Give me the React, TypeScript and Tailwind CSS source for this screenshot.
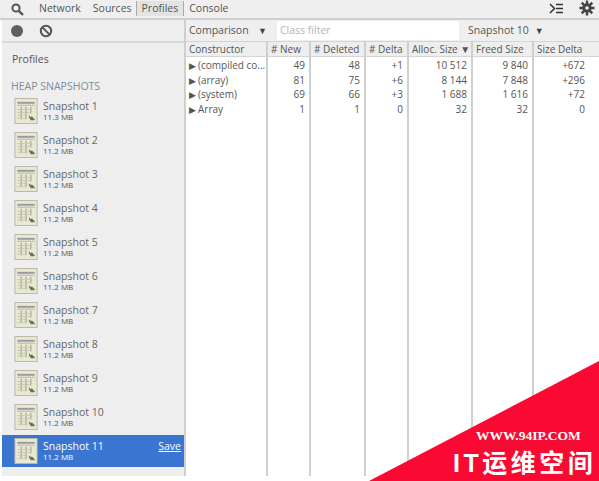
import React from 'react';

const SNAPSHOTS = [
  { name: 'Snapshot 1', size: '11.3 MB' },
  { name: 'Snapshot 2', size: '11.2 MB' },
  { name: 'Snapshot 3', size: '11.2 MB' },
  { name: 'Snapshot 4', size: '11.2 MB' },
  { name: 'Snapshot 5', size: '11.2 MB' },
  { name: 'Snapshot 6', size: '11.2 MB' },
  { name: 'Snapshot 7', size: '11.2 MB' },
  { name: 'Snapshot 8', size: '11.2 MB' },
  { name: 'Snapshot 9', size: '11.2 MB' },
  { name: 'Snapshot 10', size: '11.2 MB' },
];

const ROWS = [
  ['(compiled co...', '49', '48', '+1', '10 512', '9 840', '+672'],
  ['(array)', '81', '75', '+6', '8 144', '7 848', '+296'],
  ['(system)', '69', '66', '+3', '1 688', '1 616', '+72'],
  ['Array', '1', '1', '0', '32', '32', '0'],
];

const COLUMNS = [
  { label: 'Constructor', width: 'w-[82px] shrink-0 border-r-2' },
  { label: '# New', width: 'w-[43px] shrink-0 border-r-2' },
  { label: '# Deleted', width: 'w-[55px] shrink-0 border-r-2' },
  { label: '# Delta', width: 'w-[43px] shrink-0 border-r-2' },
  { label: 'Alloc. Size ▼', width: 'w-[64px] shrink-0 border-r-2' },
  { label: 'Freed Size', width: 'w-[61px] shrink-0 border-r-2' },
  { label: 'Size Delta', width: 'flex-1' },
];

function SnapshotIcon() {
  return (
    <svg width="24" height="26" viewBox="0 0 24 27" className="shrink-0 -mt-[3px]">
      <rect x="0.5" y="0.5" width="23" height="26" fill="#e9e8d2" stroke="#b9b8a4" />
      <rect x="3" y="4" width="18" height="2" fill="#9a9aa6" />
      <rect x="3" y="7" width="18" height="1" fill="#b4b4ba" />
      <path d="M7 9v13M12 9v13M17 9v7" stroke="#a9b096" strokeWidth="1.4" fill="none" />
      <path d="M3 12h14M3 15h14M3 18h9M3 21h9" stroke="#c8c9b4" strokeWidth="1" fill="none" />
      <path d="M15 18l2 2 1-1 3 3v1h-4l-2-3z" fill="#5b7a52" />
    </svg>
  );
}

function SnapshotRow({ name, size, selected }: { name: string; size: string; selected?: boolean }) {
  return (
    <div className={`flex items-center h-[34px] pl-[12px] pr-[3px] ${selected ? 'bg-[#3a75d2] text-white' : 'text-[#666]'}`}>
      <SnapshotIcon />
      <div className="ml-[5px] flex-1 -mt-[3px]">
        <div className="text-[10.5px] leading-[12px]">{name}</div>
        <div className={`text-[8px] leading-[10px] ${selected ? 'text-white' : 'text-[#555]'}`}>{size}</div>
      </div>
      {selected && <span className="text-[10.5px] underline self-start mt-[4px]">Save</span>}
    </div>
  );
}

export default function App() {
  return (
    <div className="relative w-[599px] h-[481px] overflow-hidden bg-white text-[10.5px] text-[#555] font-['Open_Sans','Noto_Sans',sans-serif]">
      <div className="flex items-center h-[18px] bg-[#efefef] border-b-2 border-[#cfcfcf] box-content">
        <svg width="13" height="13" viewBox="0 0 13 13" className="ml-[11px]">
          <circle cx="5" cy="5" r="3.6" fill="none" stroke="#555" strokeWidth="2" />
          <path d="M7.8 7.8L12 12" stroke="#555" strokeWidth="2.4" />
        </svg>
        <div className="flex items-center -mt-[1px]">
          <span className="ml-[15px]">Network</span>
          <span className="ml-[12px] pr-[4px] border-r border-[#aaa] leading-[15px]">Sources</span>
          <span className="px-[5px] bg-[#e3e3e3] border-r border-[#aaa] leading-[15px]">Profiles</span>
          <span className="ml-[5px]">Console</span>
        </div>
        <div className="ml-auto flex items-center gap-[15px] pr-[4px] -mt-[2px]">
          <svg width="15" height="11" viewBox="0 0 15 11">
            <path d="M1 1l4.5 4.5L1 10" fill="none" stroke="#333" strokeWidth="1.5" />
            <path d="M7 1.5h7M7 5.5h7M7 9.5h7" stroke="#333" strokeWidth="1.3" />
          </svg>
          <svg width="16" height="16" viewBox="0 0 16 16">
            <path d="M8 5a3 3 0 100 6 3 3 0 000-6z" fill="none" stroke="#444" strokeWidth="3.4" />
            <path d="M8 0.5v15M0.5 8h15M2.7 2.7l10.6 10.6M13.3 2.7L2.7 13.3" stroke="#444" strokeWidth="2.4" />
            <circle cx="8" cy="8" r="1.8" fill="#efefef" />
          </svg>
        </div>
      </div>

      <div className="flex h-[456px]">
        <aside className="w-[184px] ml-[2px] shrink-0 bg-[#eeeeee] border-r-2 border-[#cfcfcf]">
          <div className="flex items-center h-[21px] border-b-2 border-[#d9d9d9] box-content pl-[9px] gap-[16px]">
            <span className="w-[12px] h-[12px] rounded-full bg-[#5f5f5f]" />
            <svg width="14" height="14" viewBox="0 0 14 14">
              <circle cx="7" cy="7" r="5.2" fill="none" stroke="#555" strokeWidth="2" />
              <path d="M3.4 3.4l7.2 7.2" stroke="#555" strokeWidth="2" />
            </svg>
          </div>
          <div className="pl-[10px] pt-[8px] leading-[16px] text-[#555]">Profiles</div>
          <div className="pl-[9px] mt-[11px] leading-[16px] text-[#7c8da0]">HEAP SNAPSHOTS</div>
          <div className="mt-[1px]">
            {SNAPSHOTS.map((s) => (
              <SnapshotRow key={s.name} name={s.name} size={s.size} />
            ))}
            <div className="h-[32px] overflow-hidden">
              <SnapshotRow name="Snapshot 11" size="11.2 MB" selected />
            </div>
          </div>
        </aside>

        <main className="flex-1 min-w-0 flex flex-col">
          <div className="flex items-center h-[21px] bg-[#efefef] pl-[3px]">
            <span className="w-[69px]">Comparison</span>
            <span className="w-[19px] text-[9px] text-[#444]">▼</span>
            <div className="w-[182px] h-[19px] bg-white pl-[3px] leading-[19px] text-[#b5b5b5]">Class filter</div>
            <span className="ml-[9px]">Snapshot 10</span>
            <span className="ml-[6px] text-[9px] text-[#444]">▼</span>
          </div>
          <div className="flex-1 flex min-h-0">
            {COLUMNS.map((col, c) => (
              <div key={col.label} className={`${col.width} border-[#cfcfcf]`}>
                <div className="h-[14px] mb-[1px] bg-[#eeeeee] border-y border-[#d5d5d5] box-content pl-[3px] text-[10px] leading-[14px] whitespace-nowrap overflow-hidden">
                  {col.label}
                </div>
                {ROWS.map((row) => (
                  <div
                    key={row[0]}
                    className={`h-[14.7px] text-[10px] leading-[15px] whitespace-nowrap ${c === 0 ? 'pl-[3px]' : c === 6 ? 'text-right pr-[14px]' : 'text-right pr-[4px]'}`}
                  >
                    {c === 0 && <span className="text-[9px] mr-[2px]">▶</span>}
                    {row[c]}
                  </div>
                ))}
              </div>
            ))}
          </div>
        </main>
      </div>

      {/* watermark */}
      <svg width="599" height="481" viewBox="0 0 599 481" className="absolute left-0 top-0">
        <polygon points="369,481 599,361 599,481" fill="#fa0a32" />
      </svg>
      <div className="absolute left-[476px] top-[429px] text-[13.5px] font-bold text-white leading-[14px] font-['Liberation_Serif',serif]">WWW.94IP.COM</div>
      <div className="absolute left-[453px] top-[448px] text-[25px] font-bold text-white leading-[30px] tracking-[3.5px] whitespace-nowrap font-['Liberation_Sans','Noto_Sans_CJK_SC',sans-serif]">IT运维空间</div>
    </div>
  );
}
